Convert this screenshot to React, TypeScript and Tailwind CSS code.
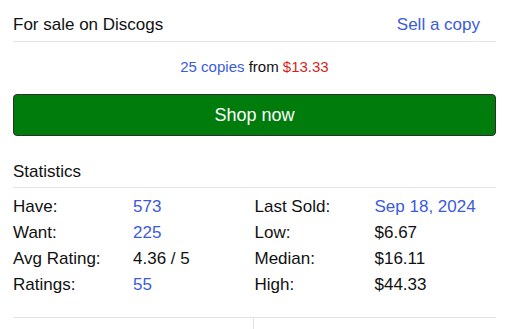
import React from "react";

const leftStats = [
  { label: "Have:", value: "573", link: true },
  { label: "Want:", value: "225", link: true },
  { label: "Avg Rating:", value: "4.36 / 5", link: false },
  { label: "Ratings:", value: "55", link: true },
];

const rightStats = [
  { label: "Last Sold:", value: "Sep 18, 2024", link: true },
  { label: "Low:", value: "$6.67", link: false },
  { label: "Median:", value: "$16.11", link: false },
  { label: "High:", value: "$44.33", link: false },
];

const StatColumn = ({ rows }: { rows: typeof leftStats }) => (
  <div className="flex flex-col">
    {rows.map((row) => (
      <div key={row.label} className="flex h-[26px] items-center">
        <span className="w-[120px] text-[#111]">{row.label}</span>
        <span className={row.link ? "text-[#3b5bdb]" : "text-[#111]"}>{row.value}</span>
      </div>
    ))}
  </div>
);

const App = () => {
  return (
    <div
      className="bg-white w-[518px] h-[329px] overflow-hidden pl-[13px] pr-[22px] text-[17px]"
      style={{ fontFamily: '"Liberation Sans", Arial, sans-serif' }}
    >
      {/* For sale header */}
      <div className="flex items-center justify-between h-[42px] border-b border-[#e3e3e3] pt-[9px]">
        <h2 className="text-[17px] text-[#111]">For sale on Discogs</h2>
        <a className="text-[17px] text-[#3b5bdb] pr-[16px]">Sell a copy</a>
      </div>

      <div className="text-center text-[15px] text-[#111] pt-[14px] h-[52px]">
        <a className="text-[#3b5bdb]">25 copies</a> from{" "}
        <span className="text-[#d31f1f]">$13.33</span>
      </div>

      <button className="w-full h-[42px] rounded-[4px] border border-[#2e2e2e] bg-[#007c0c] text-white text-[18px]">
        Shop now
      </button>

      {/* Statistics */}
      <div className="flex items-center h-[52px] pt-[20px] border-b border-[#e3e3e3]">
        <h2 className="text-[17px] text-[#111]">Statistics</h2>
      </div>

      <div className="grid grid-cols-2 pt-[6px] h-[130px] border-b border-[#e3e3e3]">
        <StatColumn rows={leftStats} />
        <StatColumn rows={rightStats} />
      </div>

      <div className="grid grid-cols-2 h-[20px]">
        <div className="border-r border-[#e3e3e3] w-[241px]" />
        <div />
      </div>
    </div>
  );
};

export default App;
